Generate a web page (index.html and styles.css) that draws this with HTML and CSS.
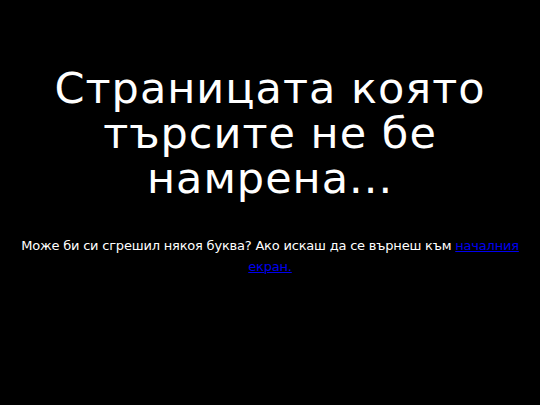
FILE: index.html
```html
<!DOCTYPE html>
<html lang="bg">
<head>
<meta charset="utf-8">
<title>404</title>
<link rel="stylesheet" href="styles.css">
</head>
<body>
<main class="notfound">
  <h1 class="title">Страницата която търсите не бе намрена...</h1>
  <p class="message">Може би си сгрешил някоя буква? Ако искаш да се върнеш към <a class="home-link" href="#">началния екран.</a></p>
</main>
</body>
</html>
```
FILE: styles.css
```css
html, body {
  background: #000;
}
body {
  margin: 8px;
  color: #fff;
  font-family: "DejaVu Sans", sans-serif;
}
.notfound {
  text-align: center;
  padding-top: 58px;
}
.title {
  font-size: 43px;
  font-weight: normal;
  line-height: 45px;
  letter-spacing: 1px;
  margin: 0 0 34px;
}
.message {
  font-size: 13px;
  line-height: 21px;
  letter-spacing: -0.2px;
  margin: 0;
}
.home-link {
  color: #0000ee;
}
```
